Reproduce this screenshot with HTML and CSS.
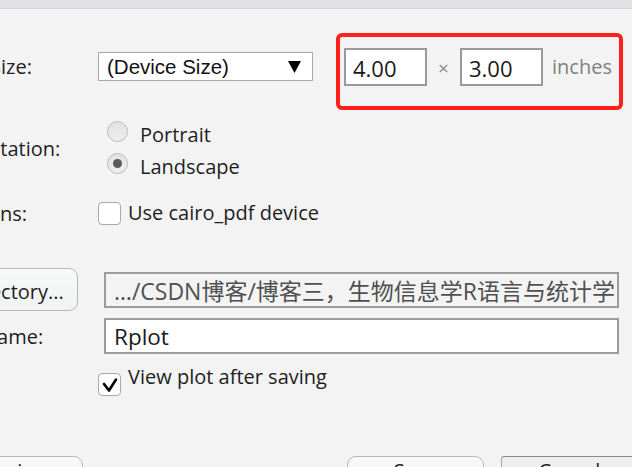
FILE: index.html
```html
<!DOCTYPE html>
<html>
<head>
<meta charset="utf-8">
<link rel="stylesheet" href="styles.css">
</head>
<body>
<div class="titlebar"></div>
<div class="dialog">
  <div class="row row-size">
    <div class="label label-size">PDF Size:</div>
    <div class="controls size-controls">
      <div class="select">
        <span>(Device Size)</span>
        <svg class="arrow" width="13" height="12" viewBox="0 0 13 12"><polygon points="0,0 13,0 6.5,12" fill="#000"/></svg>
      </div>
      <div class="dims">
        <div class="num">4.00</div>
        <span class="times">×</span>
        <div class="num">3.00</div>
        <span class="unit">inches</span>
      </div>
    </div>
  </div>

  <div class="row row-orient">
    <div class="label label-orient">Orientation:</div>
    <div class="controls radios">
      <div class="radio"><span class="circle"></span><span class="radio-text">Portrait</span></div>
      <div class="radio"><span class="circle checked"><span class="dot"></span></span><span class="radio-text">Landscape</span></div>
    </div>
  </div>

  <div class="row row-options">
    <div class="label label-options">Options:</div>
    <div class="controls check-row">
      <span class="checkbox"></span>
      <span class="check-text">Use cairo_pdf device</span>
    </div>
  </div>

  <div class="row row-dir">
    <div class="label">
      <div class="button dir-button">Directory...</div>
    </div>
    <div class="controls">
      <div class="textbox dir-box">…/CSDN博客/博客三，生物信息学R语言与统计学</div>
    </div>
  </div>

  <div class="row row-file">
    <div class="label label-file">File name:</div>
    <div class="controls">
      <div class="textbox file-box">Rplot</div>
    </div>
  </div>

  <div class="row row-view">
    <div class="label"></div>
    <div class="controls check-row">
      <span class="checkbox view-check">
        <svg width="21" height="20" viewBox="0 0 21 20"><polyline points="5,9 10,15.5 17,4.5" fill="none" stroke="#000" stroke-width="2.6" stroke-linecap="round" stroke-linejoin="round"/></svg>
      </span>
      <span class="check-text view-text">View plot after saving</span>
    </div>
  </div>

  <div class="row buttons">
    <div class="button bottom-button preview">Preview</div>
    <div class="button bottom-button save">Save</div>
    <div class="button bottom-button cancel">Cancel</div>
  </div>
</div>
</body>
</html>
```

FILE: styles.css
```css
* { box-sizing: border-box; }
html, body { margin: 0; padding: 0; }
body {
  width: 632px;
  height: 467px;
  overflow: hidden;
  background: #f2f3f2;
  font-family: "Open Sans", "Noto Sans CJK SC", sans-serif;
  font-size: 20px;
  line-height: 24px;
  color: #1e1e1e;
}
.titlebar {
  height: 9px;
  background: #e1e2e6;
  border-bottom: 1px solid #d4d5d9;
}
.dialog {
  margin-left: -52px;
  width: 720px;
  padding-top: 24px;
}
.row { display: flex; align-items: flex-start; }
.label { width: 150px; flex: none; white-space: nowrap; }
.controls { flex: none; }

/* size row */
.label-size { margin-top: 22px; }
.size-controls { display: flex; align-items: flex-start; }
.select {
  margin-top: 19px;
  width: 215px;
  height: 29px;
  border: 1px solid #a8a8a8;
  background: #fff;
  display: flex;
  align-items: center;
  justify-content: space-between;
  padding: 0 11px 0 8px;
  font-family: "Liberation Sans", Arial, sans-serif;
  font-size: 20.5px;
  line-height: 27px;
  color: #111;
}
.arrow { display: block; }
.dims {
  margin-left: 23px;
  border: 4px solid #ff2119;
  border-radius: 6px;
  padding: 11px 7px 20px 4px;
  display: flex;
  align-items: center;
}
.num {
  width: 83px;
  height: 38px;
  border: 2px solid #9a9a9a;
  background: #fff;
  padding: 3px 0 0 7px;
  font-size: 22px;
  line-height: 30px;
  color: #1a1a1a;
}
.times {
  width: 13px;
  margin: 2px 10px 0;
  text-align: center;
  color: #8a8a8a;
  font-size: 19px;
}
.unit {
  margin-left: 9px;
  color: #808080;
}

/* orientation */
.label-orient { margin-top: 27px; }
.radios { padding-top: 11px; margin-left: 9px; }
.radio { display: flex; align-items: flex-start; height: 32px; }
.circle {
  width: 21px;
  height: 21px;
  border-radius: 50%;
  border: 1px solid #bababa;
  background: linear-gradient(#e2e2e2, #eeeeee);
  display: flex;
  align-items: center;
  justify-content: center;
  flex: none;
}
.dot {
  width: 9px;
  height: 9px;
  border-radius: 50%;
  background: #595959;
}
.radio-text { margin: 2px 0 0 12px; }

/* options */
.label-options { margin-top: 17px; }
.check-row { display: flex; align-items: flex-start; }
.checkbox {
  flex: none;
  width: 23px;
  height: 23px;
  margin-top: 17px;
  border: 1.5px solid #a9a9a9;
  border-radius: 4px;
  background: #fff;
  display: flex;
  align-items: center;
  justify-content: center;
}
.check-text { margin: 16px 0 0 7px; }

/* directory */
.button {
  border: 1.5px solid #b8b8b8;
  border-radius: 9px;
  background: linear-gradient(#f7f8f8, #f1f2f2);
  text-align: center;
  white-space: nowrap;
}
.dir-button {
  margin-top: 42px;
  width: 130px;
  height: 43px;
  padding-top: 11px;
}
.textbox {
  width: 515px;
  height: 36px;
  margin-left: 6px;
  border: 2px solid #9c9c9c;
  padding: 2px 0 0 8px;
  font-size: 22.5px;
  line-height: 30px;
  white-space: nowrap;
  overflow: hidden;
}
.dir-box {
  margin-top: 46px;
  background: #f3f3f3;
  color: #505050;
  font-size: 23px;
}
.row-file .textbox { margin-top: 7px; }
.label-file { margin-top: 14px; }
.file-box { background: #fff; color: #1a1a1a; }

/* view plot */
.view-check { margin-top: 19px; }
.view-text { margin-top: 11px; }

/* bottom buttons */
.buttons { margin-top: 60px; }
.bottom-button {
  height: 43px;
  padding-top: 2px;
}
.preview { width: 141px; margin-left: -6px; }
.save { width: 137px; margin-left: 264px; }
.cancel {
  width: 137px;
  margin-left: 17px;
  border: 1px solid #a3a3a3;
  border-top-color: #8a8a8a;
  border-radius: 3px;
  background: linear-gradient(#eeeeee, #f3f3f3);
}
```
